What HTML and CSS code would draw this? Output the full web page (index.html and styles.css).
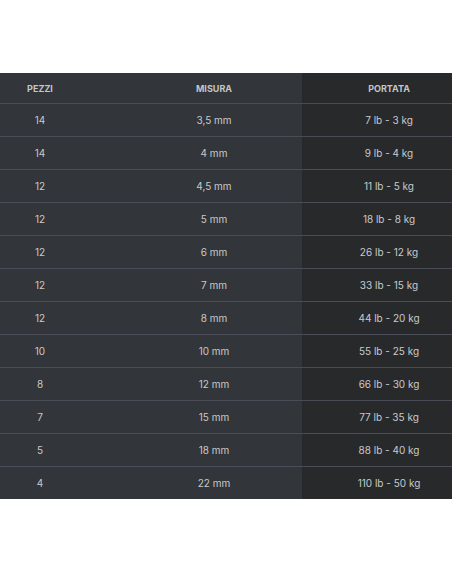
FILE: index.html
```html
<!DOCTYPE html>
<html lang="it">
<head>
    <meta charset="UTF-8">
    <meta name="viewport" content="width=device-width, initial-scale=1.0">
    <link rel="stylesheet" href="styles.css">
    <title>Tabella misure</title>
</head>
<body>
    <div class="size-table">
        <div class="row head">
            <div class="cell c1">PEZZI</div>
            <div class="cell c2">MISURA</div>
            <div class="cell c3">PORTATA</div>
        </div>
        <div class="row"><div class="cell c1">14</div><div class="cell c2">3,5 mm</div><div class="cell c3">7 lb - 3 kg</div></div>
        <div class="row"><div class="cell c1">14</div><div class="cell c2">4 mm</div><div class="cell c3">9 lb - 4 kg</div></div>
        <div class="row"><div class="cell c1">12</div><div class="cell c2">4,5 mm</div><div class="cell c3">11 lb - 5 kg</div></div>
        <div class="row"><div class="cell c1">12</div><div class="cell c2">5 mm</div><div class="cell c3">18 lb - 8 kg</div></div>
        <div class="row"><div class="cell c1">12</div><div class="cell c2">6 mm</div><div class="cell c3">26 lb - 12 kg</div></div>
        <div class="row"><div class="cell c1">12</div><div class="cell c2">7 mm</div><div class="cell c3">33 lb - 15 kg</div></div>
        <div class="row"><div class="cell c1">12</div><div class="cell c2">8 mm</div><div class="cell c3">44 lb - 20 kg</div></div>
        <div class="row"><div class="cell c1">10</div><div class="cell c2">10 mm</div><div class="cell c3">55 lb - 25 kg</div></div>
        <div class="row"><div class="cell c1">8</div><div class="cell c2">12 mm</div><div class="cell c3">66 lb - 30 kg</div></div>
        <div class="row"><div class="cell c1">7</div><div class="cell c2">15 mm</div><div class="cell c3">77 lb - 35 kg</div></div>
        <div class="row"><div class="cell c1">5</div><div class="cell c2">18 mm</div><div class="cell c3">88 lb - 40 kg</div></div>
        <div class="row"><div class="cell c1">4</div><div class="cell c2">22 mm</div><div class="cell c3">110 lb - 50 kg</div></div>
    </div>
</body>
</html>
```

FILE: styles.css
```css
body {
    margin: 0;
    background: #fff;
    font-family: Inter, 'Noto Sans', sans-serif;
}

.size-table {
    margin-top: 73px;
    background: #323539;
}

.row {
    display: grid;
    grid-template-columns: 80px 222px 150px;
    height: 32px;
    border-bottom: 1px solid #4a4d57;
}

.row:last-child {
    border-bottom: none;
}

.row.head {
    height: 30px;
}

.cell {
    display: flex;
    align-items: center;
    justify-content: center;
    font-size: 10px;
    color: #c9c9cb;
}

.c2 {
    padding-left: 46px;
}

.c3 {
    padding-left: 24px;
    background: #28292b;
}

.head .cell {
    font-size: 9px;
    font-weight: 700;
    color: #c4c5c8;
}
```
